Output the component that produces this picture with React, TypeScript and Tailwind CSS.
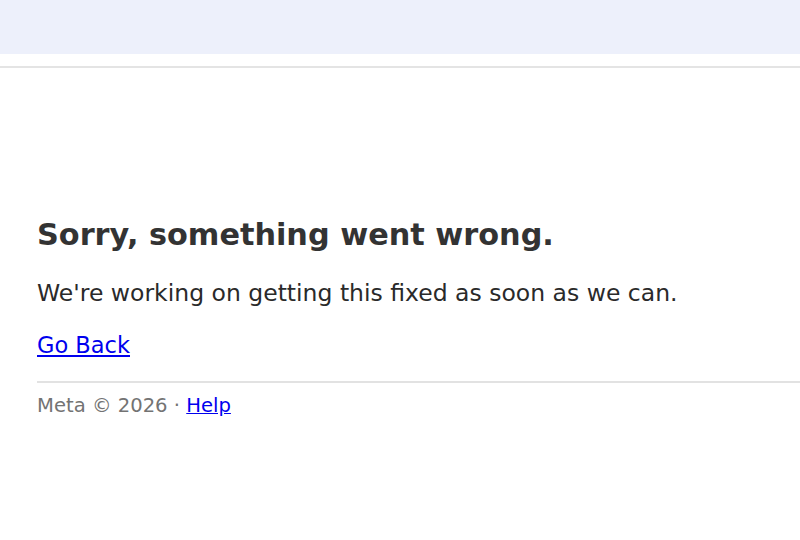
export default function App() {
  return (
    <div className="min-h-[540px] w-[800px] bg-white font-['DejaVu_Sans',sans-serif] text-[#333]">
      <div className="h-[54px] bg-[#edf0fb]" />
      <div className="h-[12px] bg-white" />
      <div className="h-[2px] bg-[#e4e4e4]" />
      <main className="pl-[37px] pt-[149px]">
        <h1 className="text-[30.3px] font-bold leading-[36px] text-[#333]">Sorry, something went wrong.</h1>
        <p className="mt-[26px] text-[23.5px] leading-[28px] text-[#2a2a2a]">
          We're working on getting this fixed as soon as we can.
        </p>
        <a href="#" className="mt-[24px] block w-fit text-[22.5px] leading-[28px] text-[#0000ee] underline">
          Go Back
        </a>
        <div className="mt-[22px] h-[2px] bg-[#e2e2e2]" />
        <footer className="mt-[11px] text-[19.6px] leading-[24px] text-[#737373]">
          Meta © 2026 · <a href="#" className="text-[#0000ee] underline">Help</a>
        </footer>
      </main>
    </div>
  );
}
